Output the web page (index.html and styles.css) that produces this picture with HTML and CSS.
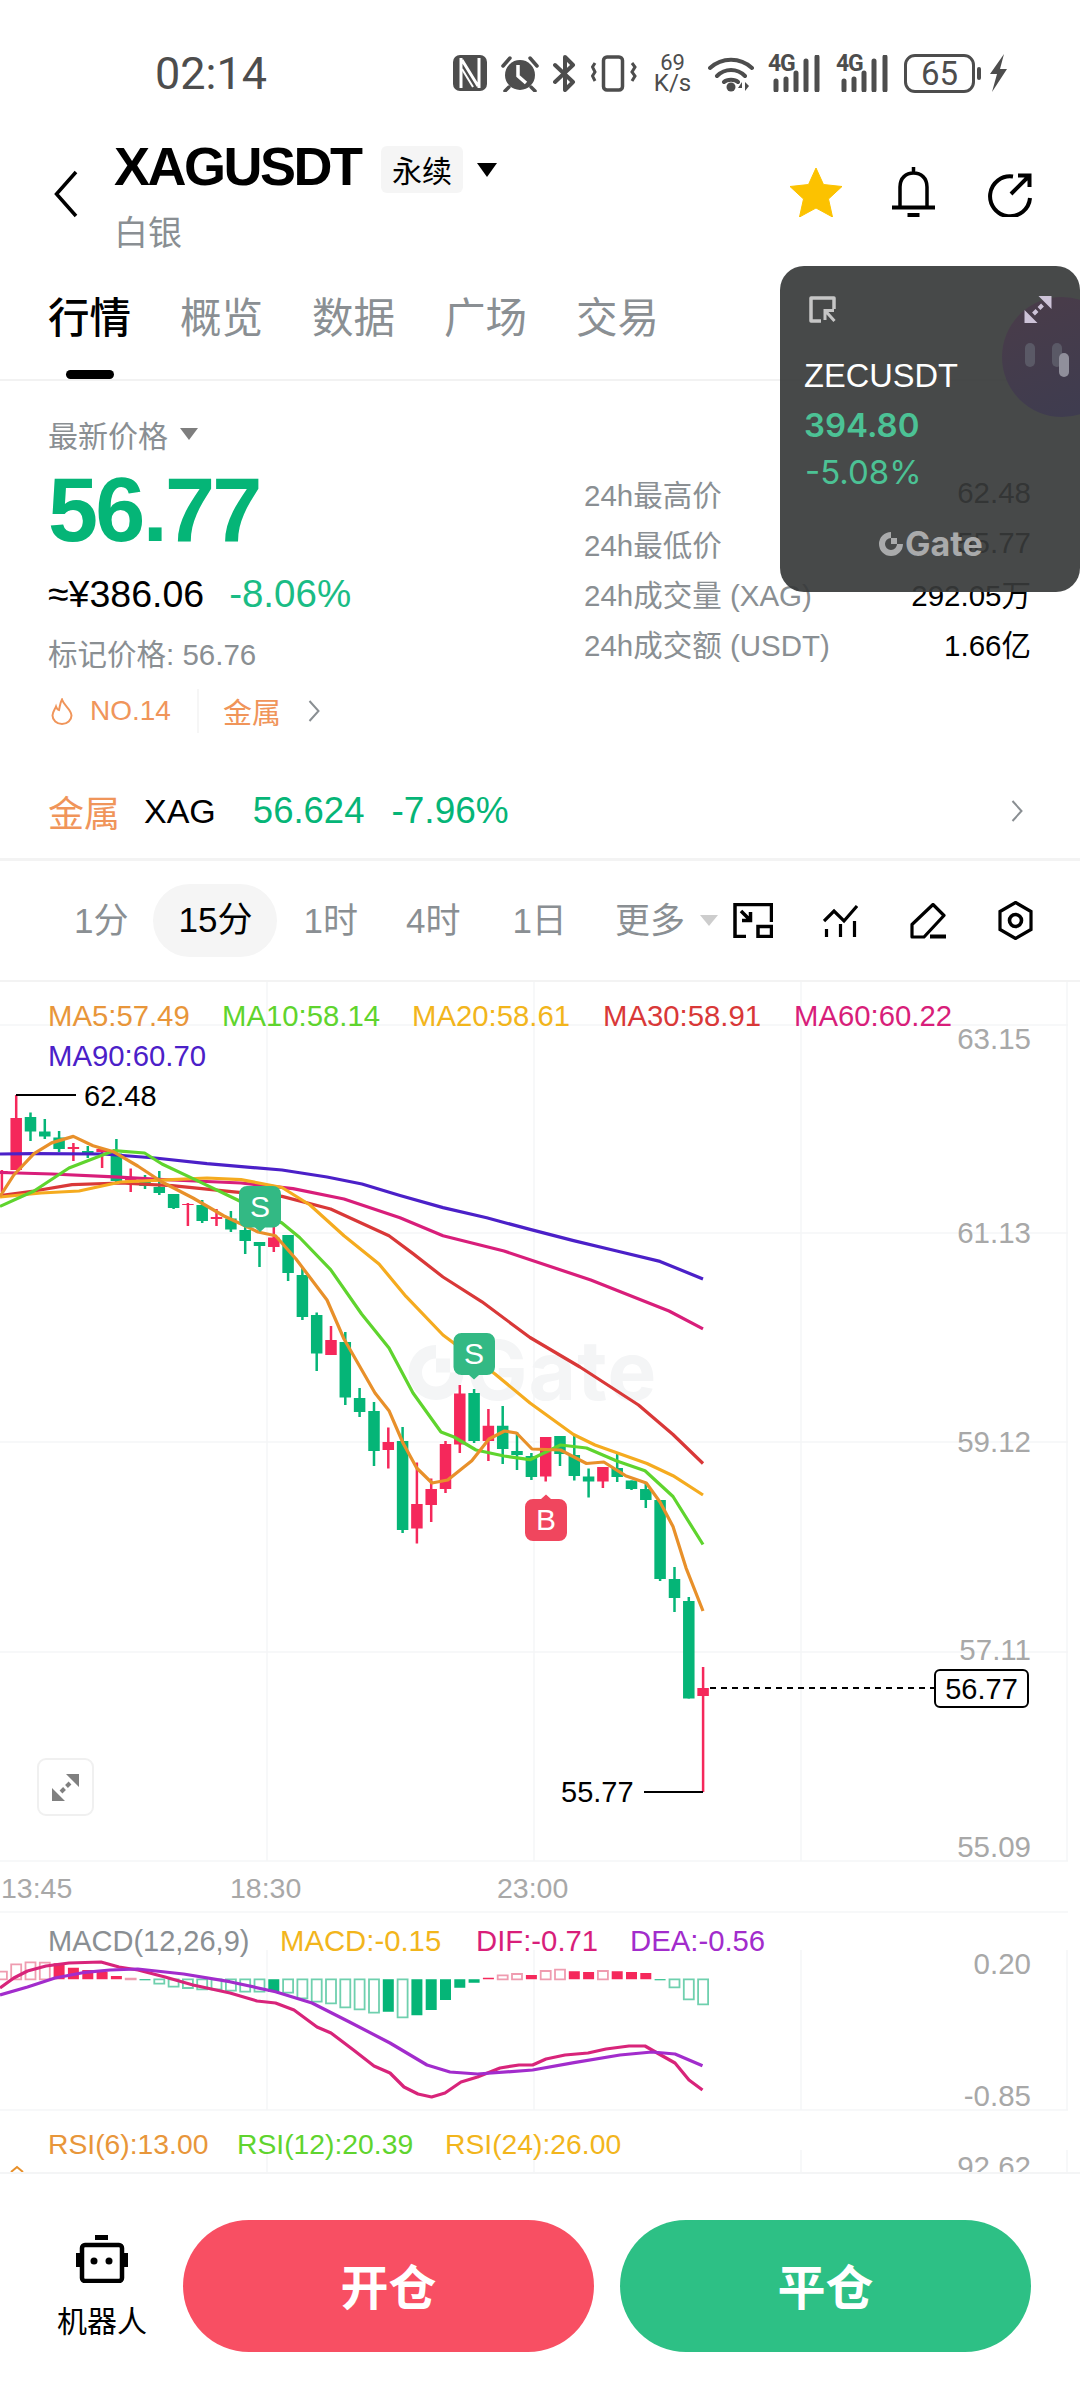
FILE: index.html
```html
<!DOCTYPE html>
<html lang="zh-CN">
<head>
<meta charset="utf-8">
<title>XAGUSDT</title>
<link rel="stylesheet" href="styles.css">
</head>
<body>
<div class="page">

  <div class="status">
    <span class="time">02:14</span>
    <div class="status-icons">
      <svg class="si" width="34" height="36" viewBox="0 0 34 36"><rect x="0" y="0" width="34" height="36" rx="7" fill="#4d4d4d"/><path d="M8 3V33M26 3V33M9 5L25 31" fill="none" stroke="#fff" stroke-width="3"/><path d="M9 14L20 32" fill="none" stroke="#fff" stroke-width="2"/></svg>
      <svg class="si" width="38" height="37" viewBox="0 0 38 37"><circle cx="19" cy="20" r="15" fill="#4d4d4d"/><path d="M17 10V21L25 28" fill="none" stroke="#fff" stroke-width="3.5"/><path d="M2 11L9 3M36 11L29 3M8 32L4 36M30 32L34 36" fill="none" stroke="#4d4d4d" stroke-width="3.5" stroke-linecap="round"/></svg>
      <svg class="si si-bt" width="23" height="37" viewBox="0 0 23 37"><path d="M2 10L20 27L12 35V2L20 10L2 27" fill="none" stroke="#4d4d4d" stroke-width="4" stroke-linejoin="round" stroke-linecap="round"/></svg>
      <svg class="si" width="46" height="37" viewBox="0 0 46 37"><rect x="12.5" y="2" width="19" height="33" rx="3.5" fill="none" stroke="#4d4d4d" stroke-width="3.5"/><path d="M4 8L1.500 12L4 17L1.500 21L4 26M41 8L44 12L41 17L44 21L41 26" fill="none" stroke="#4d4d4d" stroke-width="3"/></svg>
      <div class="speed"><span class="speed-n">69</span><span>K/s</span></div>
      <svg class="si" width="46" height="37" viewBox="0 0 46 37"><path d="M2 13C14 2 32 2 44 13M9 21C17 13 29 13 37 21M16 27C19 24 27 24 30 27" fill="none" stroke="#4d4d4d" stroke-width="4" stroke-linecap="round"/><circle cx="23" cy="32" r="4.500" fill="#4d4d4d"/><path d="M34 36V27L30 33H34M37 27V36L41 31Z" fill="#4d4d4d"/></svg>
      <div class="sig"><span class="net">4G</span><svg width="53" height="37" viewBox="0 0 53 37"><path d="M8 26V35M18 24V35M28 18V35M38 6V35M49 2V35" fill="none" stroke="#4d4d4d" stroke-width="5" stroke-linecap="round"/></svg></div>
      <div class="sig"><span class="net">4G</span><svg width="53" height="37" viewBox="0 0 53 37"><path d="M8 26V35M18 24V35M28 18V35M38 6V35M49 2V35" fill="none" stroke="#4d4d4d" stroke-width="5" stroke-linecap="round"/></svg></div>
      <div class="batt">65</div>
      <svg class="bolt" width="19" height="38" viewBox="0 0 19 38"><path d="M15 0L1 20L8 20L3 38L18 15H11Z" fill="#4d4d4d"/></svg>
    </div>
  </div>

  <header class="head">
    <svg class="back" width="26" height="48" viewBox="0 0 26 48"><path d="M23 2L3.500 24L23 46" fill="none" stroke="#000" stroke-width="3.500"/></svg>
    <div class="head-title">
      <div class="title-row">
        <h1 class="symbol">XAGUSDT</h1>
        <span class="badge">永续</span>
        <span class="caret-black"></span>
      </div>
      <div class="subtitle">白银</div>
    </div>
    <div class="head-icons">
      <svg width="52" height="49" viewBox="0 0 52 49"><path d="M26 0L33.500 16.500L52 18.500L38.500 31L42.500 49L26 40L9.500 49L13.500 31L0 18.500L18.500 16.500Z" fill="#fcc200" stroke="#fcc200" stroke-linejoin="round"/></svg>
      <svg width="43" height="50" viewBox="0 0 43 50"><path d="M8 40V20C8 11 14 6 21.500 6C29 6 35 11 35 20V40M21.500 0V6" fill="none" stroke="#000" stroke-width="3.500"/><path d="M0 40.500H43" stroke="#000" stroke-width="4"/><path d="M15.500 48H27.500" stroke="#000" stroke-width="4"/></svg>
      <svg width="44" height="44" viewBox="0 0 44 44"><path d="M25 3.500A20 20 0 1 0 42 25" fill="none" stroke="#000" stroke-width="4"/><path d="M23 21L41 3M30 2.500H41.500V14" fill="none" stroke="#000" stroke-width="4"/></svg>
    </div>
  </header>

  <nav class="tabs">
    <span class="tab active">行情</span>
    <span class="tab">概览</span>
    <span class="tab">数据</span>
    <span class="tab">广场</span>
    <span class="tab">交易</span>
  </nav>

  <section class="quote">
    <div class="quote-left">
      <div class="latest"><span>最新价格</span><span class="caret-gray"></span></div>
      <div class="price">56.77</div>
      <div class="approx"><span>≈¥386.06</span><span class="down">-8.06%</span></div>
      <div class="mark">标记价格: 56.76</div>
      <div class="hot">
        <svg width="22" height="27" viewBox="0 0 22 27"><path d="M11 1.500C13 8 20 11 20.500 17.500A9.500 8.500 0 0 1 1.500 17.500C1.500 14 4 11 5 8.500C6 11.500 8 12 8 12C9 8 9 5 11 1.500Z" fill="none" stroke="#f0955a" stroke-width="2"/></svg>
        <span class="hot-no">NO.14</span>
        <span class="hot-sep"></span>
        <span class="hot-cat">金属</span>
        <svg class="hot-chev" width="12" height="22" viewBox="0 0 12 22"><path d="M1.500 1L10.500 11L1.500 21" fill="none" stroke="#8a8f93" stroke-width="2"/></svg>
      </div>
    </div>
    <dl class="stats">
      <div class="stat"><dt>24h最高价</dt><dd>62.48</dd></div>
      <div class="stat"><dt>24h最低价</dt><dd>55.77</dd></div>
      <div class="stat"><dt>24h成交量 (XAG)</dt><dd>292.05万</dd></div>
      <div class="stat"><dt>24h成交额 (USDT)</dt><dd>1.66亿</dd></div>
    </dl>
  </section>

  <div class="metal">
    <span class="metal-name">金属</span>
    <span class="metal-sym">XAG</span>
    <span class="metal-price">56.624</span>
    <span class="metal-chg">-7.96%</span>
    <svg class="metal-chev" width="12" height="22" viewBox="0 0 12 22"><path d="M1.500 1L10.500 11L1.500 21" fill="none" stroke="#8a8f93" stroke-width="2"/></svg>
  </div>

  <div class="toolbar">
    <span class="tf tf-1">1分</span>
    <span class="tf tf-15">15分</span>
    <span class="tf tf-1h">1时</span>
    <span class="tf tf-4h">4时</span>
    <span class="tf tf-1d">1日</span>
    <span class="tf tf-more">更多</span>
    <span class="caret-light"></span>
    <svg class="tool t1" width="40" height="35" viewBox="0 0 40 35"><path d="M13 33.500H2V1.500H38.500V19" fill="none" stroke="#000" stroke-width="3.500"/><rect x="25" y="23.500" width="13.500" height="10" fill="none" stroke="#000" stroke-width="3.500"/><path d="M8 8L17 17M17.500 9V17.500H9" fill="none" stroke="#000" stroke-width="3.500"/></svg>
    <svg class="tool t2" width="35" height="33" viewBox="0 0 35 33"><path d="M1 17L11 7L21 17L34 2" fill="none" stroke="#000" stroke-width="3.200"/><path d="M3.500 25V33M17.500 20V33M31.500 17V33" fill="none" stroke="#000" stroke-width="3.200"/></svg>
    <svg class="tool t3" width="37" height="36" viewBox="0 0 37 36"><path d="M23 1.500L34 12.500L14 34H2V21.500Z" fill="none" stroke="#000" stroke-width="3.200" stroke-linejoin="round"/><path d="M20 33.500H36" stroke="#000" stroke-width="4"/></svg>
    <svg class="tool t4" width="35" height="39" viewBox="0 0 35 39"><path d="M17.500 1.500L33 10.500V28.500L17.500 37.500L2 28.500V10.500Z" fill="none" stroke="#000" stroke-width="3.200"/><circle cx="17.500" cy="19.500" r="6" fill="none" stroke="#000" stroke-width="3.600"/></svg>
  </div>

  <div class="chart">
    <svg class="chart-svg" width="1080" height="1190" viewBox="0 982 1080 1190">
      <path class="grid" d="M0 1025H1068M0 1233H1068M0 1442H1068M0 1652H1068M0 1861H1068M0 1912H1068M0 2110H1068M267 982V1861M534 982V1861M801 982V1861M1067 982V1861M267 1950V2110M534 1950V2110M801 1950V2110M1067 1950V2110M267 2150V2172M534 2150V2172M801 2150V2172M1067 2150V2172"/>

      <g class="wm">
        <path d="M436 1345A27.500 27.500 0 1 0 463.500 1372.500H450A14 14 0 1 1 436 1358.500ZM436 1358.500H450V1372.500H436Z"/>
        <text x="466" y="1400">Gate</text>
      </g>

      <path class="wick g" d="M30.500 1112.500V1141M44.800 1119V1139M59.100 1131V1152M87.800 1146V1158M116.400 1139V1182M145 1175V1189M159.300 1171V1195M173.600 1194V1209M202.200 1200V1223M230.900 1211V1232M245.200 1225V1254M259.500 1242V1267M288.100 1235V1281M302.400 1268V1320M316.700 1312.500V1371M345.300 1332V1405M359.600 1388V1417M374 1402V1466M402.600 1427V1533M474.100 1389V1443M502.700 1406V1464M517 1432V1470M531.400 1453V1480M560 1436V1466M574.300 1434.500V1480.500M588.600 1468.400V1497.500M617.200 1453V1482M631.500 1480.500V1490M645.800 1483V1508M660.100 1500V1581M674.500 1567V1612M688.800 1597V1698.600"/>
      <path class="body g" d="M30.500 1117V1131.400M44.800 1131.400V1136.400M59.100 1137.500V1149M87.800 1151V1155M116.400 1153.500V1181M145 1182V1186M159.300 1187V1193M173.600 1194V1208M202.200 1205V1221M230.900 1218.600V1229.600M245.200 1230V1241M259.500 1242V1246M288.100 1235V1273M302.400 1275V1317M316.700 1315V1353.600M345.300 1342V1397.500M359.600 1398V1412M374 1411V1451M402.600 1441V1530M474.100 1393V1441M502.700 1425.700V1449M517 1451V1455M531.400 1456V1477M560 1436V1454M574.300 1455V1476M588.600 1476.600V1481.500M617.200 1468V1477M631.500 1480.500V1489M645.800 1489V1500M660.100 1500V1579M674.500 1579V1598M688.800 1601V1698.600"/>
      <path class="wick r" d="M1.900 1170V1192M16.200 1095V1170M73.400 1143V1161M102.100 1149V1168M130.700 1168.600V1192M187.900 1203V1226M216.500 1209V1226M273.800 1227V1252M331 1326V1355M388.300 1427.500V1468.600M416.900 1462.500V1543.600M431.200 1478.600V1522M445.500 1441V1493M459.800 1385V1453M488.400 1409V1461M545.700 1437V1481.500M602.900 1467V1488M703.100 1667V1792"/>
      <path class="body r" d="M1.900 1171V1173M16.200 1118V1170M73.400 1147V1149M102.100 1149V1152M130.700 1178V1180.500M187.900 1204V1205M216.500 1217V1219M273.800 1237.500V1247M331 1340V1355M388.300 1442V1450M416.900 1504V1528.600M431.200 1489V1505M445.500 1444V1489M459.800 1393.600V1444.600M488.400 1425.700V1441M545.700 1437V1476.600M602.900 1467V1481.500M703.100 1688V1696"/>

      <polyline class="ln c90" points="0,1154 34,1153.600 103,1154 155,1158 207,1163.600 282,1170 327,1177 362,1184 400,1195.500 443,1207.600 486.700,1217.800 530,1229.400 573.500,1240.600 616.800,1251 660,1261.400 703,1279"/>
      <polyline class="ln c60" points="0,1172.500 52,1174 114,1176.800 172,1180 241,1183 293,1188.600 344,1199 400,1217.800 443,1235.700 504,1251 590.800,1280 669,1311 703,1328.800"/>
      <polyline class="ln c30" points="0,1195.700 34,1191 72,1184.600 120.500,1183 172,1185.700 234,1191.800 282,1196.400 330.600,1209 389,1235.700 413,1253.600 443,1277 482,1301.800 530,1337.500 580,1367 638.500,1405 673,1434.500 703,1463.500"/>
      <polyline class="ln c20" points="0,1197 41,1193 79,1191 120.500,1182 172,1179.600 207,1178 241,1179.600 282,1187.500 310,1205 344,1235.700 379,1264 406,1296.400 443,1335 495,1374 530,1403 573.500,1434.500 595,1445 647,1463.500 673,1475.700 703,1495"/>
      <polyline class="ln c10" points="0,1206.400 34,1191 69,1168 113.600,1150.700 144.600,1153 162,1164 193,1178.600 237.600,1200 282,1223 299.600,1237.500 330.600,1269.600 361.600,1314 389,1348 413,1393 441,1432 454,1437 476,1450 504,1456 530,1459.700 560.500,1445 586.500,1448 616.800,1461 645,1470.800 673,1496.500 703,1544.500"/>
      <polyline class="ln c5" points="0,1196.400 13.800,1175 34,1153.600 51.600,1142.900 73.300,1136.400 93,1145.700 113.600,1151.800 137.700,1166 162,1182 193,1198 224,1216 258,1232 275.500,1235.700 296,1259 327,1300 344,1339 375,1393 389,1410.700 403,1443 416.700,1468 432,1483 447.700,1480 471.800,1460.700 489,1439 504.500,1431 516.500,1433 532,1449 560.500,1450 586.500,1463.500 603.800,1462 625.500,1475.700 646.300,1483 660,1502 673,1526.600 686,1567.800 703,1611"/>

      <path class="leader" d="M16 1095H76M644 1792H703"/>
      <path class="dash" d="M710 1688H935"/>
      <text class="val" x="84" y="1106">62.48</text>
      <text class="val" x="561" y="1802">55.77</text>
      <rect class="last-box" x="935" y="1670" width="93" height="37" rx="5"/>
      <text class="val" x="981.500" y="1699" text-anchor="middle">56.77</text>

      <path class="mk-s" d="M247 1186H273A8 8 0 0 1 281 1194V1219.500A8 8 0 0 1 273 1227.500H265L260 1232L255 1227.500H247A8 8 0 0 1 239 1219.500V1194A8 8 0 0 1 247 1186Z"/>
      <text class="mk-t" x="260" y="1217" text-anchor="middle">S</text>
      <path class="mk-s" d="M461.500 1333H487A8 8 0 0 1 495 1341V1367A8 8 0 0 1 487 1375H479L474 1379.500L469 1375H461.500A8 8 0 0 1 453.500 1367V1341A8 8 0 0 1 461.500 1333Z"/>
      <text class="mk-t" x="474" y="1364" text-anchor="middle">S</text>
      <path class="mk-b" d="M533 1499H541L546 1494.500L551 1499H559A8 8 0 0 1 567 1507V1533A8 8 0 0 1 559 1541H533A8 8 0 0 1 525 1533V1507A8 8 0 0 1 533 1499Z"/>
      <text class="mk-t" x="546" y="1530" text-anchor="middle">B</text>

      <text class="leg c-ma5" x="48" y="1026">MA5:57.49</text>
      <text class="leg c-ma10" x="222" y="1026">MA10:58.14</text>
      <text class="leg c-ma20" x="412" y="1026">MA20:58.61</text>
      <text class="leg c-ma30" x="603" y="1026">MA30:58.91</text>
      <text class="leg c-ma60" x="794" y="1026">MA60:60.22</text>
      <text class="leg c-ma90" x="48" y="1066">MA90:60.70</text>

      <g class="axis">
        <text x="1031" y="1049">63.15</text>
        <text x="1031" y="1243">61.13</text>
        <text x="1031" y="1452">59.12</text>
        <text x="1031" y="1660">57.11</text>
        <text x="1031" y="1857">55.09</text>
        <text x="1031" y="1974">0.20</text>
        <text x="1031" y="2106">-0.85</text>
        <text x="1031" y="2177">92.62</text>
      </g>
      <g class="axis-t">
        <text x="1" y="1898">13:45</text>
        <text x="230" y="1898">18:30</text>
        <text x="497" y="1898">23:00</text>
      </g>

      <text class="leg leg-m c-gray" x="48" y="1951">MACD(12,26,9)</text>
      <text class="leg c-ma20" x="280" y="1951">MACD:-0.15</text>
      <text class="leg c-ma60" x="476" y="1951">DIF:-0.71</text>
      <text class="leg c-dea" x="630" y="1951">DEA:-0.56</text>

      <path class="bar r" d="M59.100 1979.300V1963.300M73.400 1979.300V1967.700M87.800 1979.300V1970M102.100 1979.300V1971.700M116.400 1979.300V1976M488.400 1979.300V1977.700M531.400 1979.300V1975M574.300 1979.300V1971.300M588.600 1979.300V1972M617.200 1979.300V1971.300M631.500 1979.300V1972M645.800 1979.300V1973"/>
      <path class="bar g" d="M145 1979.300V1980.300M273.800 1979.300V1992M388.300 1979.300V2011.700M416.900 1979.300V2015.300M431.200 1979.300V2010M445.500 1979.300V2000M459.800 1979.300V1987.700M474.100 1979.300V1982.700M660.100 1979.300V1980.300"/>
      <path class="hollow r" d="M-3.100 1979.300V1971.700H6.900V1979.300ZM11.200 1979.300V1964.300H21.200V1979.300ZM25.500 1979.300V1962.300H35.500V1979.300ZM39.800 1979.300V1962.700H49.800V1979.300ZM125.700 1979.300V1978.700H135.700V1979.300ZM497.700 1979.300V1975.300H507.700V1979.300ZM512 1979.300V1974H522V1979.300ZM540.700 1979.300V1971H550.700V1979.300ZM555 1979.300V1969.700H565V1979.300ZM597.900 1979.300V1971H607.900V1979.300Z"/>
      <path class="hollow g" d="M154.300 1979.300V1983.700H164.300V1979.300ZM168.600 1979.300V1986.700H178.600V1979.300ZM182.900 1979.300V1988H192.900V1979.300ZM197.200 1979.300V1989.300H207.200V1979.300ZM211.500 1979.300V1989.300H221.500V1979.300ZM225.900 1979.300V1990.700H235.900V1979.300ZM240.200 1979.300V1991.700H250.200V1979.300ZM254.500 1979.300V1991.700H264.500V1979.300ZM283.100 1979.300V1992.700H293.100V1979.300ZM297.400 1979.300V1998.300H307.400V1979.300ZM311.700 1979.300V2001.700H321.700V1979.300ZM326 1979.300V2003.300H336V1979.300ZM340.300 1979.300V2007.300H350.300V1979.300ZM354.600 1979.300V2009.300H364.600V1979.300ZM369 1979.300V2012.700H379V1979.300ZM397.600 1979.300V2017.300H407.600V1979.300ZM669.500 1979.300V1987.300H679.500V1979.300ZM683.800 1979.300V1999.300H693.800V1979.300ZM698.100 1979.300V2004.300H708.100V1979.300Z"/>

      <polyline class="ln cdif" points="0,1988 13.800,1978 27.500,1971 46,1966 69,1963 101,1962 119,1967 138,1970 165,1977 193,1985 230,1993 257,2001 275.500,2003 294,2010 317,2027 331,2033 353.500,2050 374,2066 390,2073 404,2087 418,2094 431.600,2097 445,2093 461,2082 477.500,2077 500,2068 519,2065 532.600,2065 546,2059 565,2055 588,2053 606,2049 629,2046 645,2046 659,2054 675,2063 689,2080 702.500,2090"/>
      <polyline class="ln cdea" points="0,1995 27.500,1987 55,1978 82.600,1972.700 110,1970 137.700,1969 183.600,1974 229.600,1981.700 275.500,1991.700 312,2003 349,2021.700 390,2043 427,2065 450,2072 477.500,2074 532.600,2070 574,2062.700 620,2055 652,2052 675,2054 702.500,2065.700"/>

      <text class="leg leg-r c-ma5" x="48" y="2154">RSI(6):13.00</text>
      <text class="leg leg-r c-ma10" x="237" y="2154">RSI(12):20.39</text>
      <text class="leg leg-r c-ma20" x="445" y="2154">RSI(24):26.00</text>
      <path class="rsi-tip" d="M11 2172L17 2167L23 2172"/>
    </svg>

    <div class="expand">
      <svg width="27" height="27" viewBox="0 0 27 27"><path d="M14 0H27V13ZM0 14V27H13Z" fill="#808080"/><path d="M18 9L14.500 12.500M9 18L12.500 14.500" stroke="#808080" stroke-width="4"/></svg>
    </div>
  </div>

  <footer class="bottom">
    <div class="robot">
      <svg width="52" height="48" viewBox="0 0 52 48"><rect x="19" y="0" width="13" height="5" fill="#000"/><rect x="6" y="10" width="40" height="36" rx="3" fill="none" stroke="#000" stroke-width="4.500"/><rect x="0" y="18" width="4" height="14" fill="#000"/><rect x="48" y="18" width="4" height="14" fill="#000"/><circle cx="18" cy="26" r="3.500" fill="#000"/><circle cx="33" cy="26" r="3.500" fill="#000"/></svg>
      <span>机器人</span>
    </div>
    <button class="btn btn-open">开仓</button>
    <button class="btn btn-close">平仓</button>
  </footer>

  <aside class="float">
    <div class="float-blob">
      <span class="dot d1"></span><span class="dot d2"></span><span class="dot d3"></span>
    </div>
    <div class="float-icons">
      <svg width="28" height="27" viewBox="0 0 28 27"><path d="M13 25H3V2H26V13" fill="none" stroke="#c6c6c6" stroke-width="3.500" stroke-linejoin="round"/><path d="M17.500 15L26.500 25M17 24V14.500H26" fill="none" stroke="#c6c6c6" stroke-width="3"/></svg>
      <svg width="28" height="27" viewBox="0 0 27 27"><path d="M14 0H27V13ZM0 14V27H13Z" fill="#cdc3d8"/><path d="M18 9L14.500 12.500M9 18L12.500 14.500" stroke="#cdc3d8" stroke-width="4"/></svg>
    </div>
    <div class="float-sym">ZECUSDT</div>
    <div class="float-price">394.80</div>
    <div class="float-chg">-5.08%</div>
    <div class="float-logo">
      <svg width="24" height="24" viewBox="0 0 24 24"><path d="M12 0A12 12 0 1 0 24 12H18A6 6 0 1 1 12 6ZM12 6H18V12H12Z" fill="#a9aaab"/></svg>
      <span>Gate</span>
    </div>
  </aside>
</div>
</body>
</html>
```

FILE: styles.css
```css
* { box-sizing: border-box; margin: 0; padding: 0; }
html, body { background: #fff; }
body { font-family: "Liberation Sans", "Noto Sans CJK SC", sans-serif; color: #000; }
.page { position: relative; width: 1080px; height: 2400px; overflow: hidden; background: #fff; }

/* status bar */
.status { height: 146px; display: flex; align-items: center; padding-left: 155px; }
.time { font-family: Roboto, sans-serif; font-size: 45px; color: #4d4d4d; width: 298px; }
.status-icons { display: flex; align-items: center; }
.status-icons > * { flex: none; margin-right: 14px; }
.status-icons > .si-bt { margin-right: 15px; }
.status-icons > .speed { display: flex; flex-direction: column; align-items: center; width: 37px; font-family: Roboto, sans-serif; font-size: 24px; line-height: 21px; color: #4d4d4d; margin-left: 3px; margin-right: 17px; }
.speed-n { font-size: 22px; }
.status-icons > .sig { position: relative; width: 53px; height: 37px; margin-right: 15px; }
.sig svg { display: block; }
.net { position: absolute; left: 0; top: 0; font-family: Roboto, sans-serif; font-weight: 700; font-size: 23px; line-height: 18px; letter-spacing: -1.2px; color: #4d4d4d; }
.status-icons > .batt { width: 71px; height: 39px; border: 3px solid #4d4d4d; border-radius: 11px; font-family: Roboto, sans-serif; font-size: 33px; line-height: 33px; color: #4d4d4d; text-align: center; position: relative; margin-right: 14px; }
.batt::after { content: ""; position: absolute; right: -9px; top: 10px; width: 4px; height: 13px; background: #4d4d4d; border-radius: 2px; }
.status-icons > .bolt { margin-right: 0; }

/* header */
.head { height: 124px; display: flex; position: relative; }
.back { flex: none; margin: 24px 0 0 53px; }
.head-title { margin-left: 35px; }
.title-row { display: flex; align-items: center; height: 47px; }
.symbol { font-size: 54px; font-weight: 700; letter-spacing: -2.5px; line-height: 47px; width: 267px; margin-top: -6px; }
.badge { background: #f5f5f5; border-radius: 6px; width: 82px; height: 47px; line-height: 46px; text-align: center; font-size: 30px; font-family: "Noto Sans CJK SC", sans-serif; }
.caret-black { width: 0; height: 0; border-left: 10.5px solid transparent; border-right: 10.5px solid transparent; border-top: 14px solid #000; margin-left: 14px; }
.subtitle { font-size: 34px; line-height: 40px; color: #8a8f93; margin-top: 20px; }
.head-icons { position: absolute; left: 790px; top: 21px; display: flex; align-items: center; }
.head-icons svg:nth-child(2) { margin-left: 50px; }
.head-icons svg:nth-child(3) { margin-left: 53px; margin-top: 5px; }

/* tabs */
.tabs { height: 111px; display: flex; gap: 49px; padding: 26px 0 0 48px; border-bottom: 2px solid #f2f2f2; position: relative; }
.tab { font-size: 41.5px; line-height: 46px; color: #8a8f93; }
.tab.active { color: #000; font-weight: 500; position: relative; }
.tab.active::after { content: ""; position: absolute; left: 18px; top: 74px; width: 48px; height: 9px; background: #000; border-radius: 5px; }

/* quote */
.quote { height: 389px; display: flex; justify-content: space-between; padding-right: 49px; }
.quote-left { padding: 38px 0 0 48px; }
.latest { height: 30px; display: flex; align-items: center; font-size: 30px; color: #8a8f93; }
.caret-gray { width: 0; height: 0; border-left: 9px solid transparent; border-right: 9px solid transparent; border-top: 12px solid #7e7e7e; margin-left: 12px; }
.price { margin-top: 21px; height: 80px; line-height: 80px; font-size: 90px; font-weight: 700; letter-spacing: -2.7px; color: #05b577; }
.approx { margin-top: 24px; height: 40px; line-height: 40px; font-size: 37.5px; display: flex; gap: 25px; white-space: nowrap; }
.down { color: #1abc85; font-size: 38.5px; }
.mark { margin-top: 21px; height: 40px; line-height: 40px; font-size: 29.5px; color: #8a8f93; }
.hot { margin-top: 16px; height: 40px; display: flex; align-items: center; font-size: 28px; color: #f0955a; padding-left: 3px; }
.hot-no { margin-left: 17px; }
.hot-sep { width: 2px; height: 44px; background: #f6f6f6; margin: 0 24px 0 26px; }
.hot-cat { font-size: 29px; }
.hot-chev { margin-left: 27px; }
.stats { padding-top: 87px; width: 447px; }
.stat { height: 50px; display: flex; align-items: center; justify-content: space-between; font-size: 29.5px; white-space: nowrap; }
.stat dt { color: #8a8f93; }
.stat dd { color: #000; }

/* metal */
.metal { height: 91px; display: flex; align-items: center; padding: 0 57px 6px 48px; border-bottom: 3px solid #f3f3f3; white-space: nowrap; position: relative; }
.metal-name { font-size: 36px; color: #f0955a; }
.metal-sym { font-size: 34px; margin-left: 24px; }
.metal-price { font-size: 36.5px; color: #05b577; margin-left: 37px; }
.metal-chg { font-size: 37px; color: #05b577; margin-left: 27px; }
.metal-chev { margin-left: auto; }

/* toolbar */
.toolbar { height: 121px; display: flex; align-items: center; border-bottom: 2px solid #f3f3f3; padding-left: 74px; font-size: 35px; }
.tf { color: #8a8f93; white-space: nowrap; line-height: 38px; }
.tf-15 { color: #000; background: #f5f5f5; width: 124px; height: 73px; line-height: 71px; border-radius: 37px; text-align: center; margin-left: 25px; }
.tf-1h { margin-left: 26px; }
.tf-4h { margin-left: 48px; }
.tf-1d { margin-left: 52px; }
.tf-more { margin-left: 48px; }
.caret-light { width: 0; height: 0; border-left: 9px solid transparent; border-right: 9px solid transparent; border-top: 11px solid #cdcdcd; margin-left: 15px; }
.tool { flex: none; }
.t1 { margin-left: 15px; }
.t2 { margin-left: 50px; }
.t3 { margin-left: 52px; }
.t4 { margin-left: 51px; }

/* chart */
.chart { position: relative; height: 1190px; }
.chart-svg { display: block; font-family: "Liberation Sans", sans-serif; overflow: hidden; }
.grid { fill: none; stroke: #f5f6f7; stroke-width: 1.5; }
.wm { fill: #f4f5f6; font-family: Inter, sans-serif; font-weight: 700; font-size: 82px; letter-spacing: 1px; }
.wick { fill: none; stroke-width: 2.5; }
.body { fill: none; stroke-width: 11.5; }
.bar { fill: none; stroke-width: 11; }
.hollow { fill: #fff; fill-opacity: 0.4; stroke-width: 1.8; }
.wick.g, .body.g, .bar.g { stroke: #05b577; }
.wick.r, .body.r, .bar.r { stroke: #f5285b; }
.hollow.g { stroke: #6fd0ae; }
.hollow.r { stroke: #ef9cb0; }
.ln { fill: none; stroke-width: 3.2; stroke-linejoin: round; }
.c90 { stroke: #4b20c8; }
.c60 { stroke: #d81e7a; }
.c30 { stroke: #d93838; }
.c20 { stroke: #f5ab1f; }
.c10 { stroke: #5fd42e; }
.c5 { stroke: #e8902a; }
.cdif { stroke: #d8247a; }
.cdea { stroke: #a22ccc; }
.leader { fill: none; stroke: #000; stroke-width: 2; }
.dash { fill: none; stroke: #000; stroke-width: 2; stroke-dasharray: 6 5; }
.val { font-size: 29px; fill: #000; }
.last-box { fill: #fff; stroke: #000; stroke-width: 2; }
.mk-s { fill: #33b984; }
.mk-b { fill: #f0465e; }
.mk-t { font-size: 30px; fill: #fff; }
.leg { font-size: 29.3px; }
.leg-m { font-size: 29px; }
.leg-r { font-size: 28.3px; }
.c-ma5 { fill: #e8963a; }
.c-ma10 { fill: #5fd42e; }
.c-ma20 { fill: #f2b51c; }
.c-ma30 { fill: #d93838; }
.c-ma60 { fill: #d81e7a; }
.c-ma90 { fill: #4b20c8; }
.c-gray { fill: #8a8f93; }
.c-dea { fill: #a22ccc; }
.axis { font-size: 29.5px; fill: #a8a8a8; text-anchor: end; }
.axis-t { font-size: 28.5px; fill: #a8a8a8; }
.rsi-tip { fill: none; stroke: #e8902a; stroke-width: 2; }
.expand { position: absolute; left: 37px; top: 776px; width: 57px; height: 58px; border: 2px solid #f0f0f0; border-radius: 9px; background: #fff; display: flex; align-items: center; justify-content: center; }

/* bottom */
.bottom { height: 228px; border-top: 2px solid #f4f5f6; display: flex; padding: 46px 49px 0 58px; }
.robot { width: 88px; flex: none; display: flex; flex-direction: column; align-items: center; padding-top: 15px; font-size: 30px; margin-right: 37px; }
.robot span { margin-top: 22px; line-height: 34px; white-space: nowrap; }
.btn { height: 132px; border: 0; border-radius: 66px; color: #fff; font-family: "Noto Sans CJK SC", sans-serif; font-size: 48px; font-weight: 700; flex: 1; padding-bottom: 5px; }
.btn-open { background: #f84f63; margin-right: 26px; }
.btn-close { background: #2dc085; }

/* floating window */
.float { position: absolute; left: 780px; top: 266px; width: 300px; height: 326px; border-radius: 24px; background: rgba(55, 57, 58, 0.92); overflow: hidden; color: #fff; }
.float-blob { position: absolute; left: 222px; top: 31px; width: 120px; height: 120px; border-radius: 50%; background: linear-gradient(160deg, #4a3c49, #3d3c50); }
.dot { position: absolute; width: 10px; border-radius: 5px; }
.d1 { left: 23px; top: 46px; height: 24px; background: #5a5966; }
.d2 { left: 50px; top: 46px; height: 24px; background: #5a5966; }
.d3 { left: 57px; top: 56px; height: 24px; background: #908f9b; }
.float-icons { position: absolute; left: 28px; right: 28px; top: 30px; display: flex; justify-content: space-between; }
.float-sym { position: absolute; left: 24px; top: 91px; font-size: 32.6px; line-height: 38px; }
.float-price { position: absolute; left: 24px; top: 139px; font-family: Inter, sans-serif; font-weight: 600; font-size: 33px; line-height: 40px; color: #4cc295; }
.float-chg { position: absolute; left: 25px; top: 186px; font-family: Inter, sans-serif; font-size: 33px; line-height: 40px; color: #4cc295; }
.float-logo { position: absolute; left: 99px; top: 266px; display: flex; align-items: center; gap: 2px; font-family: Inter, sans-serif; font-weight: 700; font-size: 34px; line-height: 24px; color: #a9aaab; }
```
